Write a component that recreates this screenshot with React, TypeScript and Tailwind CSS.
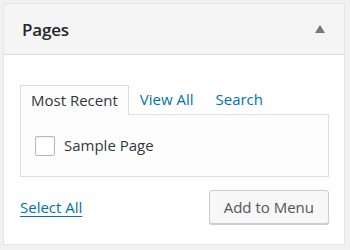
const font = { fontFamily: "'Open Sans', Lato, sans-serif" };

const App = () => {
  return (
    <div
      className="h-[250px] w-[350px] overflow-hidden bg-[#f1f1f1] pl-[3px] pt-[3px]"
      style={font}
    >
      <div className="w-[342px] border border-[#e5e5e5] bg-white">
        {/* header */}
        <div className="flex h-[51px] items-center justify-between border-b border-[#dddddd] bg-[#f5f5f5] pl-[18px] pr-[19px]">
          <h3 className="pt-[1px] text-[17px] font-semibold tracking-[-0.2px] text-[#23282d]">Pages</h3>
          <svg width="10" height="8" viewBox="0 0 10 8" className="mb-[1px]">
            <polygon points="5,0 10,8 0,8" fill="#72777c" />
          </svg>
        </div>

        {/* body */}
        <div className="px-[16px] pb-[20px] pt-[30px]">
          <ul className="relative z-10 flex text-[15px] leading-[29px]">
            <li className="-mb-px border border-b-0 border-[#dddddd] bg-[#fdfdfd] px-[10px] text-[#32373c]">
              Most Recent
            </li>
            <li className="px-[11px] text-[#0073aa]">View All</li>
            <li className="px-[11px] text-[#0073aa]">Search</li>
          </ul>
          <div className="flex h-[63px] w-[309px] items-center border border-[#dddddd] bg-[#fdfdfd] pl-[14px]">
            <label className="flex items-center gap-[9px] text-[15px] text-[#32373c]">
              <span className="h-[20px] w-[20px] rounded-[2px] border border-[#b4b9be] bg-white shadow-[inset_0_1px_2px_rgba(0,0,0,0.07)]" />
              Sample Page
            </label>
          </div>
          <div className="mt-[13px] flex w-[309px] items-center justify-between">
            <a className="text-[15px] text-[#0073aa] underline underline-offset-[3px]">
              Select All
            </a>
            <button className="h-[34px] rounded-[3px] border border-[#cccccc] bg-[#f7f7f7] px-[14px] text-[15px] text-[#555555] shadow-[0_1px_0_#cccccc]">
              Add to Menu
            </button>
          </div>
        </div>
      </div>
    </div>
  );
};

export default App;
